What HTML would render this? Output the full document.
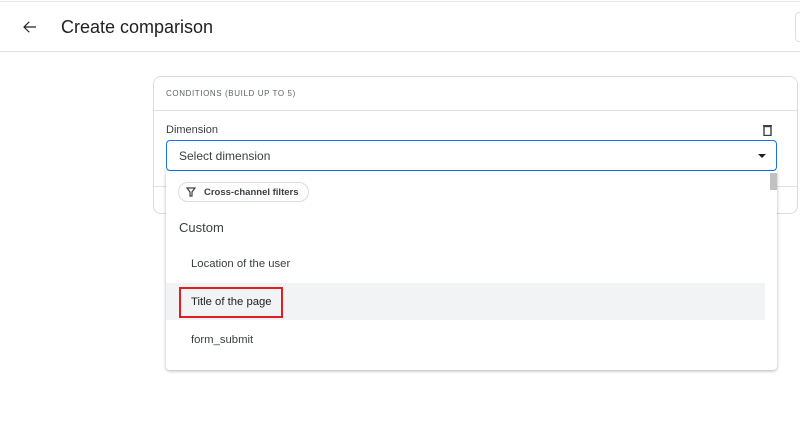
<!DOCTYPE html>
<html><head><style>
body{margin:0;width:800px;height:424px;background:#fff;font-family:"Liberation Sans",sans-serif;position:relative;overflow:hidden;color:#202124}
.a{position:absolute}
</style></head><body>
<div class="a" style="left:0;top:1px;width:800px;height:1px;background:#e8e8e8"></div>
<div class="a" style="left:0;top:51px;width:800px;height:1px;background:#e0e0e0"></div>
<div class="a" style="left:795px;top:12px;width:10px;height:28px;border:1px solid #e0e0e0;border-radius:4px"></div>
<svg class="a" style="left:21px;top:18px" width="18" height="18" viewBox="0 0 24 24"><path d="M20 12H5M11 5l-7 7 7 7" stroke="#202124" stroke-width="1.6" fill="none"/></svg>
<div class="a" style="left:61px;top:17px;font-size:18px;color:#202124">Create comparison</div>

<div class="a" style="left:153px;top:76px;width:645px;height:138px;border:1px solid #dadce0;border-radius:8px;box-sizing:border-box"></div>
<div class="a" style="left:166px;top:89px;font-size:8px;letter-spacing:.6px;color:#5f6368">CONDITIONS (BUILD UP TO 5)</div>
<div class="a" style="left:154px;top:110px;width:643px;height:1px;background:#e0e0e0"></div>
<div class="a" style="left:154px;top:186px;width:643px;height:1px;background:#e0e0e0"></div>
<div class="a" style="left:166px;top:124px;font-size:11px;color:#3c4043">Dimension</div>
<svg class="a" style="left:762px;top:124px" width="11" height="12" viewBox="0 0 11 12"><rect x="2" y="2.5" width="7" height="9" fill="none" stroke="#3c4043" stroke-width="1.4"/><rect x="1" y="1" width="9" height="1.4" fill="#3c4043"/></svg>
<div class="a" style="left:166px;top:140px;width:611px;height:31px;border:1px solid #1a73e8;border-radius:4px;box-sizing:border-box"></div>
<div class="a" style="left:179px;top:149px;font-size:12px;color:#3c4043">Select dimension</div>
<div class="a" style="left:758px;top:154px;width:0;height:0;border-left:4px solid transparent;border-right:4px solid transparent;border-top:4px solid #202124"></div>

<div class="a" style="left:166px;top:171px;width:611px;height:199px;background:#fff;box-shadow:0 1px 3px rgba(0,0,0,.3);border-radius:0 0 4px 4px"></div>
<div class="a" style="left:770px;top:173px;width:7px;height:17px;background:#c1c1c1"></div>
<div class="a" style="left:178px;top:182px;width:131px;height:20px;border:1px solid #dadce0;border-radius:10px;box-sizing:border-box"></div>
<svg class="a" style="left:186px;top:187px" width="10" height="10" viewBox="0 0 10 10"><path d="M1 1h8L6 5v4H4V5z" fill="none" stroke="#3c4043" stroke-width="1.2"/></svg>
<div class="a" style="left:204px;top:187px;font-size:9.5px;font-weight:bold;color:#3c4043">Cross-channel filters</div>
<div class="a" style="left:179px;top:220px;font-size:13px;color:#3c4043">Custom</div>
<div class="a" style="left:191px;top:258px;font-size:11.3px;color:#3c4043">Location of the user</div>
<div class="a" style="left:166px;top:283px;width:599px;height:37px;background:#f1f3f4"></div>
<div class="a" style="left:179px;top:287px;width:104px;height:31px;border:2px solid #e02020;box-sizing:border-box"></div>
<div class="a" style="left:191px;top:296px;font-size:11.3px;color:#202124">Title of the page</div>
<div class="a" style="left:191px;top:334px;font-size:11.3px;color:#3c4043">form_submit</div>
</body></html>
